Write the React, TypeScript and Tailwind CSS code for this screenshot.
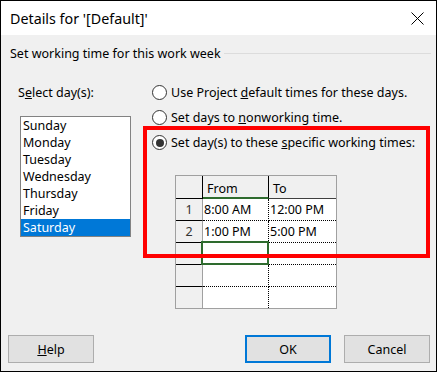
import React from 'react';

// ──────────────────────────────────────────────
// Small pieces
// ──────────────────────────────────────────────

function Radio({ checked, children }: { checked?: boolean; children: React.ReactNode }) {
  return (
    <div className="flex items-center h-[17px]">
      <span className="w-[15px] h-[15px] rounded-full border border-[#333] bg-white flex items-center justify-center shrink-0">
        {checked && <span className="w-[8px] h-[8px] rounded-full bg-[#333]" />}
      </span>
      <span className="ml-[4px]">{children}</span>
    </div>
  );
}

function Btn({ children, primary }: { children: React.ReactNode; primary?: boolean }) {
  return (
    <button
      className={`w-[86px] h-[28px] bg-[#e1e1e1] flex items-center justify-center ${
        primary ? 'border-2 border-[#0078d7]' : 'border border-[#adadad]'
      }`}
    >
      {children}
    </button>
  );
}

const days = ['Sunday', 'Monday', 'Tuesday', 'Wednesday', 'Thursday', 'Friday', 'Saturday'];

const rows = [
  { n: '1', from: '8:00 AM', to: '12:00 PM' },
  { n: '2', from: '1:00 PM', to: '5:00 PM' },
  { n: '', from: '', to: '' },
  { n: '', from: '', to: '' },
  { n: '', from: '', to: '' },
];

function TimeTable() {
  return (
    <div className="w-[162px] border border-[#a0a0a0] grid grid-cols-[27px_66px_67px]">
      {/* header */}
      <div className="h-[23px] bg-[#f0f0f0] border-r border-b border-black" />
      <div className="h-[23px] bg-[#f0f0f0] border-r border-black border-b-2 border-b-[#2e6b2e] pl-[4px] pt-[5px] leading-[16px]">From</div>
      <div className="h-[23px] bg-[#f0f0f0] border-b border-[#404040] pl-[4px] pt-[5px] leading-[16px]">To</div>

      {rows.map((r, i) => {
        const last = i === rows.length - 1;
        const h = last ? 'h-[21px]' : 'h-[22px]';
        return (
          <React.Fragment key={i}>
            <div className={`${h} bg-[#f0f0f0] border-r border-r-[#a0a0a0] ${last ? '' : 'border-b border-b-black'} flex items-center justify-center text-[#333]`}>
              {r.n}
            </div>
            <div className={`${h} relative bg-white border-dotted border-black border-r ${last ? '' : 'border-b'} flex items-center pl-[1px]`}>
              {r.from}
              {i === 2 && (
                <div className="absolute left-[-2px] top-[-2px] w-[68px] h-[24px] border-2 border-[#2e6b2e]" />
              )}
            </div>
            <div className={`${h} bg-white border-dotted border-black ${last ? '' : 'border-b'} flex items-center pl-[1px]`}>
              {r.to}
            </div>
          </React.Fragment>
        );
      })}
    </div>
  );
}

// ──────────────────────────────────────────────
// DIALOG
// ──────────────────────────────────────────────

export default function App() {
  return (
    <div
      className="relative w-[437px] h-[372px] border border-black bg-[#f0f0f0] flex flex-col text-[12.5px] text-black leading-[17px]"
      style={{ fontFamily: '"Segoe UI", "Noto Sans", sans-serif' }}
    >
      {/* title bar */}
      <div className="h-[34px] bg-white flex items-center justify-between pl-[9px] pr-[12px]">
        <span className="text-[14.3px]">Details for '[Default]'</span>
        <svg width="13" height="13" viewBox="0 0 13 13">
          <path d="M0.5 0.5 L12.5 12.5 M12.5 0.5 L0.5 12.5" stroke="#000" strokeWidth="1" />
        </svg>
      </div>

      {/* group header */}
      <div className="mt-[10px] h-[17px] flex items-center pl-[9px] pr-[5px]">
        <span>Set working time for this work week</span>
        <span className="flex-1 h-px bg-[#dcdcdc] ml-[3px]" />
      </div>

      <div className="mt-[22px] flex">
        {/* day list */}
        <div className="w-[151px] pl-[17px]">
          <div className="h-[17px]">
            S<span className="underline">e</span>lect day(s):
          </div>
          <div className="mt-[15px] ml-[2px] w-[111px] h-[121px] border border-[#828282] bg-white">
            {days.map((d) => (
              <div
                key={d}
                className={`h-[17px] pl-[2px] ${d === 'Saturday' ? 'bg-[#0078d7] text-white' : ''}`}
              >
                {d}
              </div>
            ))}
          </div>
        </div>

        {/* options */}
        <div className="flex flex-col">
          <div className="flex flex-col gap-[8px]">
            <Radio>
              Use Project <span className="underline">d</span>efault times for these days.
            </Radio>
            <Radio>
              Set days to <span className="underline">n</span>onworking time.
            </Radio>
            <Radio checked>
              Set day(s) to these <span className="underline">s</span>pecific working times:
            </Radio>
          </div>
          <div className="mt-[24px] ml-[23px]">
            <TimeTable />
          </div>
        </div>
      </div>

      {/* buttons */}
      <div className="mt-auto flex items-center pl-[7px] pr-[6px] pb-[8px]">
        <Btn>
          <span className="underline">H</span>elp
        </Btn>
        <div className="flex-1" />
        <Btn primary>OK</Btn>
        <div className="w-[13px]" />
        <Btn>Cancel</Btn>
      </div>

      {/* red highlight drawn over the dialog */}
      <div className="absolute left-[142px] top-[125px] w-[287px] h-[132px] border-4 border-[#ff0000] pointer-events-none" />
    </div>
  );
}
